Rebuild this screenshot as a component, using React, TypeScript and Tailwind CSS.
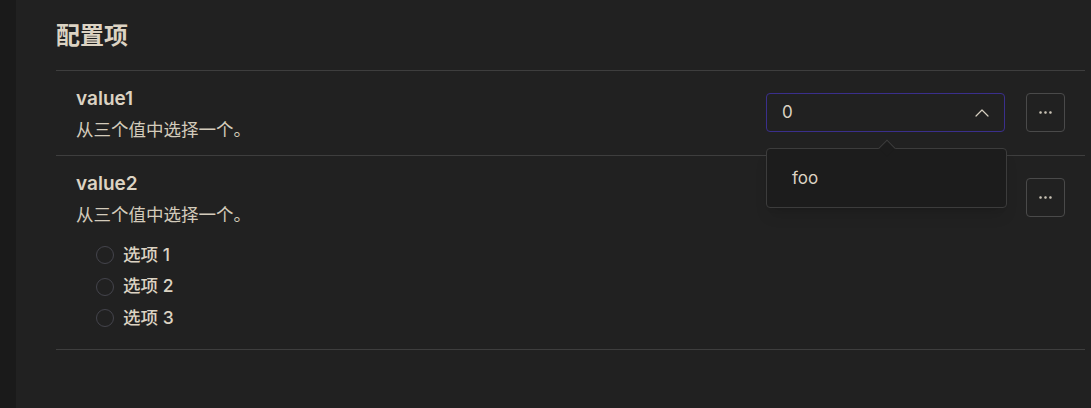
import { ChevronUp, Ellipsis } from 'lucide-react';

const FONT = { fontFamily: 'Inter, "Noto Sans CJK SC", sans-serif' };

const OPTIONS = ['选项 1', '选项 2', '选项 3'];

function MoreButton() {
	return (
		<button className="flex h-[39px] w-[39px] items-center justify-center rounded border border-[#4a4a4a] text-[#d6cfc0]">
			<Ellipsis size={17} strokeWidth={1.6} />
		</button>
	);
}

export default function App() {
	return (
		<div className="flex h-[408px] w-full bg-[#1a1a1a]" style={FONT}>
			<div className="w-4 shrink-0" />
			<div className="flex-1 bg-[#212121] pl-10 pr-[6px] text-[#dcd3c3]">
				<h2 className="flex h-[70px] items-center pt-[2px] text-[24px] font-bold">配置项</h2>

				<div className="border-t border-[#3e3e3e]">
					<div className="flex h-[84px] items-start justify-between pl-5 pr-[20px]">
						<div className="pt-[16px]">
							<div className="text-[19px] font-semibold leading-6">value1</div>
							<div className="mt-[7px] text-[17.5px] leading-6 text-[#d3cbbb]">从三个值中选择一个。</div>
						</div>
						<div className="flex items-center gap-[21px] pt-[22px]">
							<div className="relative">
								<div className="flex h-[39px] w-[239px] items-center justify-between rounded border border-[#3a2f8c] pl-[15px] pr-[10px]">
									<span className="text-[17px]">0</span>
									<ChevronUp size={24} strokeWidth={1.2} className="text-[#d6cfc0]" />
								</div>
								<div className="absolute left-0 top-[55px] z-10 w-[241px] rounded border border-[#3c3c3c] bg-[#1c1c1c] py-[17px] pl-[25px] text-[17px] leading-6 shadow-lg">
									<span className="absolute -top-[7px] left-[114px] h-3 w-3 rotate-45 border-l border-t border-[#3c3c3c] bg-[#1c1c1c]" />
									foo
								</div>
							</div>
							<MoreButton />
						</div>
					</div>
				</div>

				<div className="border-t border-[#3e3e3e]">
					<div className="flex h-[193px] items-start justify-between pl-5 pr-[20px]">
						<div className="pt-[16px]">
							<div className="text-[19px] font-semibold leading-6">value2</div>
							<div className="mt-[7px] text-[17.5px] leading-6 text-[#d3cbbb]">从三个值中选择一个。</div>
							<div className="mt-[16px] flex flex-col gap-[7.5px] pl-5">
								{OPTIONS.map((opt) => (
									<label key={opt} className="flex h-6 items-center gap-[9px] text-[17.5px] font-medium">
										<span className="h-[18px] w-[18px] rounded-full border border-[#44444c]" />
										{opt}
									</label>
								))}
							</div>
						</div>
						<div className="pt-[22px]">
							<MoreButton />
						</div>
					</div>
				</div>
				<div className="border-t border-[#3e3e3e]" />
			</div>
		</div>
	);
}
